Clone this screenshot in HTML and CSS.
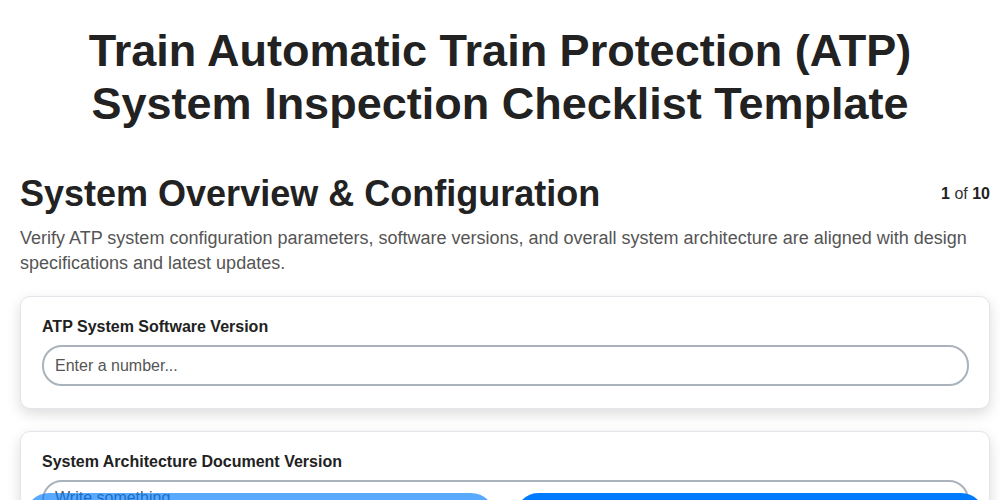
FILE: index.html
```html
<!DOCTYPE html>
<html lang="en">
<head>
<meta charset="utf-8">
<title>Train ATP System Inspection Checklist Template</title>
<link rel="stylesheet" href="styles.css">
</head>
<body>
<div class="page">
  <h1 class="title">Train Automatic Train Protection (ATP) System Inspection Checklist Template</h1>
  <div class="section-head">
    <h2 class="section-title">System Overview &amp; Configuration</h2>
    <div class="progress"><b>1</b> of <b>10</b></div>
  </div>
  <p class="section-desc">Verify ATP system configuration parameters, software versions, and overall system architecture are aligned with design specifications and latest updates.</p>
  <div class="card">
    <label class="field-label" for="q1">ATP System Software Version</label>
    <input class="field-input" id="q1" type="text" placeholder="Enter a number...">
  </div>
  <div class="card">
    <label class="field-label" for="q2">System Architecture Document Version</label>
    <textarea class="field-input field-area" id="q2" placeholder="Write something..."></textarea>
  </div>
</div>
<div class="nav">
  <button class="btn btn-prev" disabled>Previous</button>
  <button class="btn btn-next">Next</button>
</div>
</body>
</html>
```
FILE: styles.css
```css
* { box-sizing: border-box; }
html, body { margin: 0; padding: 0; background: #fff; }
body {
  font-family: "Liberation Sans", Arial, sans-serif;
  color: #222;
  overflow: hidden;
}
.page {
  padding: 24px 10px 0 20px;
}
.title {
  margin: 0 0 42px;
  text-align: center;
  font-size: 45px;
  line-height: 53px;
  font-weight: 700;
  color: #222;
  padding: 0 45px 0 35px;
}
.section-head {
  display: flex;
  justify-content: space-between;
  align-items: center;
}
.section-title {
  margin: 0;
  font-size: 36px;
  line-height: 44px;
  font-weight: 700;
  color: #222;
}
.progress {
  font-size: 16px;
  color: #333;
}
.progress b { color: #222; }
.section-desc {
  margin: 10px 0 20px;
  font-size: 18px;
  line-height: 25px;
  color: #555;
}
.card {
  background: #fff;
  border: 1px solid #e4e4ea;
  border-radius: 10px;
  box-shadow: 0 5px 14px rgba(0, 0, 0, 0.14);
  padding: 20px 20px 22px 21px;
  margin-bottom: 22px;
}
.field-label {
  display: block;
  font-size: 16px;
  font-weight: 700;
  line-height: 20px;
  color: #222;
  margin-bottom: 8px;
}
.field-input {
  display: block;
  width: 100%;
  height: 41px;
  border: 2px solid #aab2bb;
  border-radius: 20px;
  padding: 0 11px;
  font-family: "Liberation Sans", Arial, sans-serif;
  font-size: 16px;
  color: #333;
  background: #fff;
}
.field-input::placeholder { color: #555; }
.field-area {
  height: 90px;
  padding: 7px 11px;
  resize: none;
}
.nav {
  position: fixed;
  left: 25px;
  right: 15px;
  top: 493px;
  display: flex;
  gap: 20px;
}
.btn {
  flex: 1;
  height: 48px;
  border: none;
  border-radius: 24px;
  background: #007bff;
  color: #fff;
  font-family: "Liberation Sans", Arial, sans-serif;
  font-size: 16px;
  font-weight: 700;
}
.btn-prev { opacity: 0.65; }
```
